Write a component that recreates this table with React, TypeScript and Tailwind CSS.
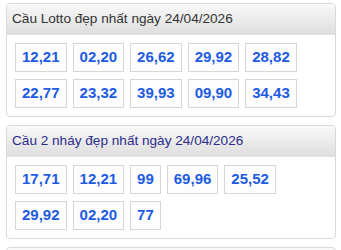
const PANELS = [
  {
    title: "Cầu Lotto đẹp nhất ngày 24/04/2026",
    titleClass: "text-[#333333]",
    numbers: ["12,21", "02,20", "26,62", "29,92", "28,82", "22,77", "23,32", "39,93", "09,90", "34,43"],
  },
  {
    title: "Cầu 2 nháy đẹp nhất ngày 24/04/2026",
    titleClass: "text-[#2b2d8c]",
    numbers: ["17,71", "12,21", "99", "69,96", "25,52", "29,92", "02,20", "77"],
  },
];

function Panel({ title, titleClass, numbers }: (typeof PANELS)[number]) {
  return (
    <section className="mb-[8px] w-[330px] overflow-hidden rounded-[4px] border border-[#d9d9d9] bg-white">
      <div className="flex h-[31px] items-center border-b border-[#e2e2e2] bg-gradient-to-b from-[#f9f9f9] to-[#dedede] px-[5px]">
        <h3 className={`text-[13.6px] leading-none ${titleClass}`}>{title}</h3>
      </div>
      <div className="flex flex-wrap gap-x-[6px] gap-y-[7px] px-[8px] pt-[8px] pb-[8px]">
        {numbers.map((n, i) => (
          <span
            key={i}
            className="flex h-[29px] items-center border border-[#d6d6d6] bg-[#fdfdfd] px-[6px] text-[15px] font-bold text-[#1d5be4]"
          >
            {n}
          </span>
        ))}
      </div>
    </section>
  );
}

export default function App() {
  return (
    <div className="h-[250px] overflow-hidden bg-white pt-[3px] pl-[6px] font-['Liberation_Sans',Arial,sans-serif]">
      {PANELS.map((p) => (
        <Panel key={p.title} {...p} />
      ))}
      {/* next panel, only its top edge shows */}
      <div className="h-[40px] w-[330px] rounded-[4px] border border-[#d9d9d9] bg-gradient-to-b from-[#f9f9f9] to-[#dedede]" />
    </div>
  );
}
